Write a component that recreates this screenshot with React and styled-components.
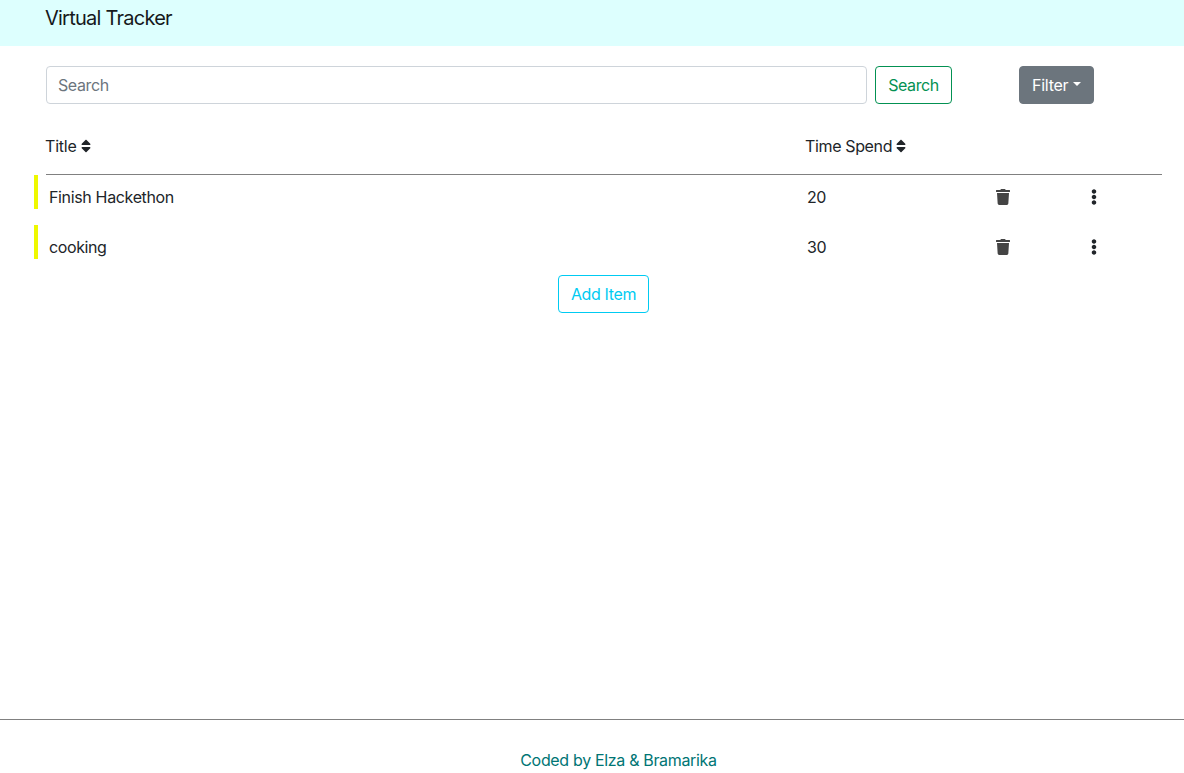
import React from "react";
import styled, { createGlobalStyle } from "styled-components";
import { FaSort, FaTrash, FaEllipsisV } from "react-icons/fa";

const GlobalStyle = createGlobalStyle`
  *, *::before, *::after { box-sizing: border-box; }
  body {
    margin: 0;
    font-family: Inter, "Liberation Sans", sans-serif;
    font-size: 16px;
    line-height: 24px;
    letter-spacing: -0.35px;
    color: #212529;
    background: #fff;
  }
`;

const Page = styled.div`
  display: flex;
  flex-direction: column;
  height: 773px;
  overflow: hidden;
`;

const Header = styled.header`
  height: 46px;
  padding: 3px 45px 0;
  background: #ddfffe;
`;

const Brand = styled.h1`
  margin: 0;
  font-size: 20px;
  line-height: 30px;
  font-weight: 400;
  letter-spacing: -0.76px;
  color: #16191c;
`;

const Main = styled.main`
  flex: 1;
  padding: 20px 22px 0 46px;
`;

const Toolbar = styled.form`
  display: flex;
  height: 38px;
`;

const SearchInput = styled.input`
  width: 821px;
  margin-right: 8px;
  padding: 6px 11px;
  border: 1px solid #ced4da;
  border-radius: 4px;
  font: inherit;
  letter-spacing: -0.4px;
  color: #212529;
  outline: none;
  &::placeholder { color: #6c757d; opacity: 1; }
`;

const Button = styled.button`
  display: flex;
  align-items: center;
  justify-content: center;
  width: ${(p) => p.$width}px;
  height: 38px;
  padding: 0;
  border: 1px solid ${(p) => p.$color};
  border-radius: 4px;
  background: ${(p) => (p.$solid ? p.$color : "#fff")};
  color: ${(p) => (p.$solid ? "#fff" : p.$color)};
  font: inherit;
  letter-spacing: ${(p) => p.$spacing || -0.36}px;
`;

const FilterButton = styled(Button)`
  margin-left: 67px;
`;

const Caret = styled.span`
  margin: 0 0 2px 4.6px;
  border-top: 4.8px solid currentColor;
  border-left: 4.8px solid transparent;
  border-right: 4.8px solid transparent;
`;

const Columns = styled.div`
  display: grid;
  grid-template-columns: 758px 188px 91px 79px;
`;

const TableHead = styled(Columns)`
  grid-template-columns: 760px 356px;
  height: 71px;
  padding-top: 30px;
  border-bottom: 1px solid #808080;
`;

const Heading = styled.div`
  display: flex;
  align-items: center;
  height: 24px;
  margin-left: -1px;
  white-space: pre;
  letter-spacing: ${(p) => p.$spacing}px;
`;

const SortIcon = styled(FaSort)`
  width: 10px;
  height: 16px;
`;

const Row = styled(Columns)`
  align-items: center;
  height: 34px;
  margin: 0 0 16px -12px;
  padding: 10px 0 0 11px;
  border-left: 4px solid #eef800;
`;

const Cell = styled.div`
  display: flex;
  height: 24px;
  align-items: center;
  letter-spacing: ${(p) => p.$spacing || 0}px;
  color: ${(p) => p.$color || "inherit"};
`;

const AddRow = styled.div`
  display: flex;
  padding-left: 512px;
`;

const Footer = styled.footer`
  height: 54px;
  padding: 28px 0 0 53px;
  border-top: 1px solid #808080;
  text-align: center;
  letter-spacing: -0.33px;
  color: #007574;
`;

const items = [
  { title: "Finish Hackethon", time: 20, spacing: -0.35 },
  { title: "cooking", time: 30, spacing: -0.4 },
];

export default function App() {
  return (
    <Page>
      <GlobalStyle />
      <Header>
        <Brand>Virtual Tracker</Brand>
      </Header>
      <Main>
        <Toolbar>
          <SearchInput placeholder="Search" />
          <Button type="button" $width={77} $color="#039152" $spacing={-0.4}>Search</Button>
          <FilterButton type="button" $width={75} $color="#6c757d" $spacing={-0.25} $solid>
            Filter
            <Caret />
          </FilterButton>
        </Toolbar>
        <TableHead>
          <Heading $spacing={-0.2}>{"Title "}<SortIcon /></Heading>
          <Heading $spacing={-0.36}>{"Time Spend "}<SortIcon /></Heading>
        </TableHead>
        {items.map((item) => (
          <Row key={item.title}>
            <Cell $spacing={item.spacing}>{item.title}</Cell>
            <Cell $spacing={-0.5}>{item.time}</Cell>
            <Cell $color="#444"><FaTrash /></Cell>
            <Cell><FaEllipsisV /></Cell>
          </Row>
        ))}
        <AddRow>
          <Button type="button" $width={91} $color="#00cbf2">Add Item</Button>
        </AddRow>
      </Main>
      <Footer>Coded by Elza &amp; Bramarika</Footer>
    </Page>
  );
}
